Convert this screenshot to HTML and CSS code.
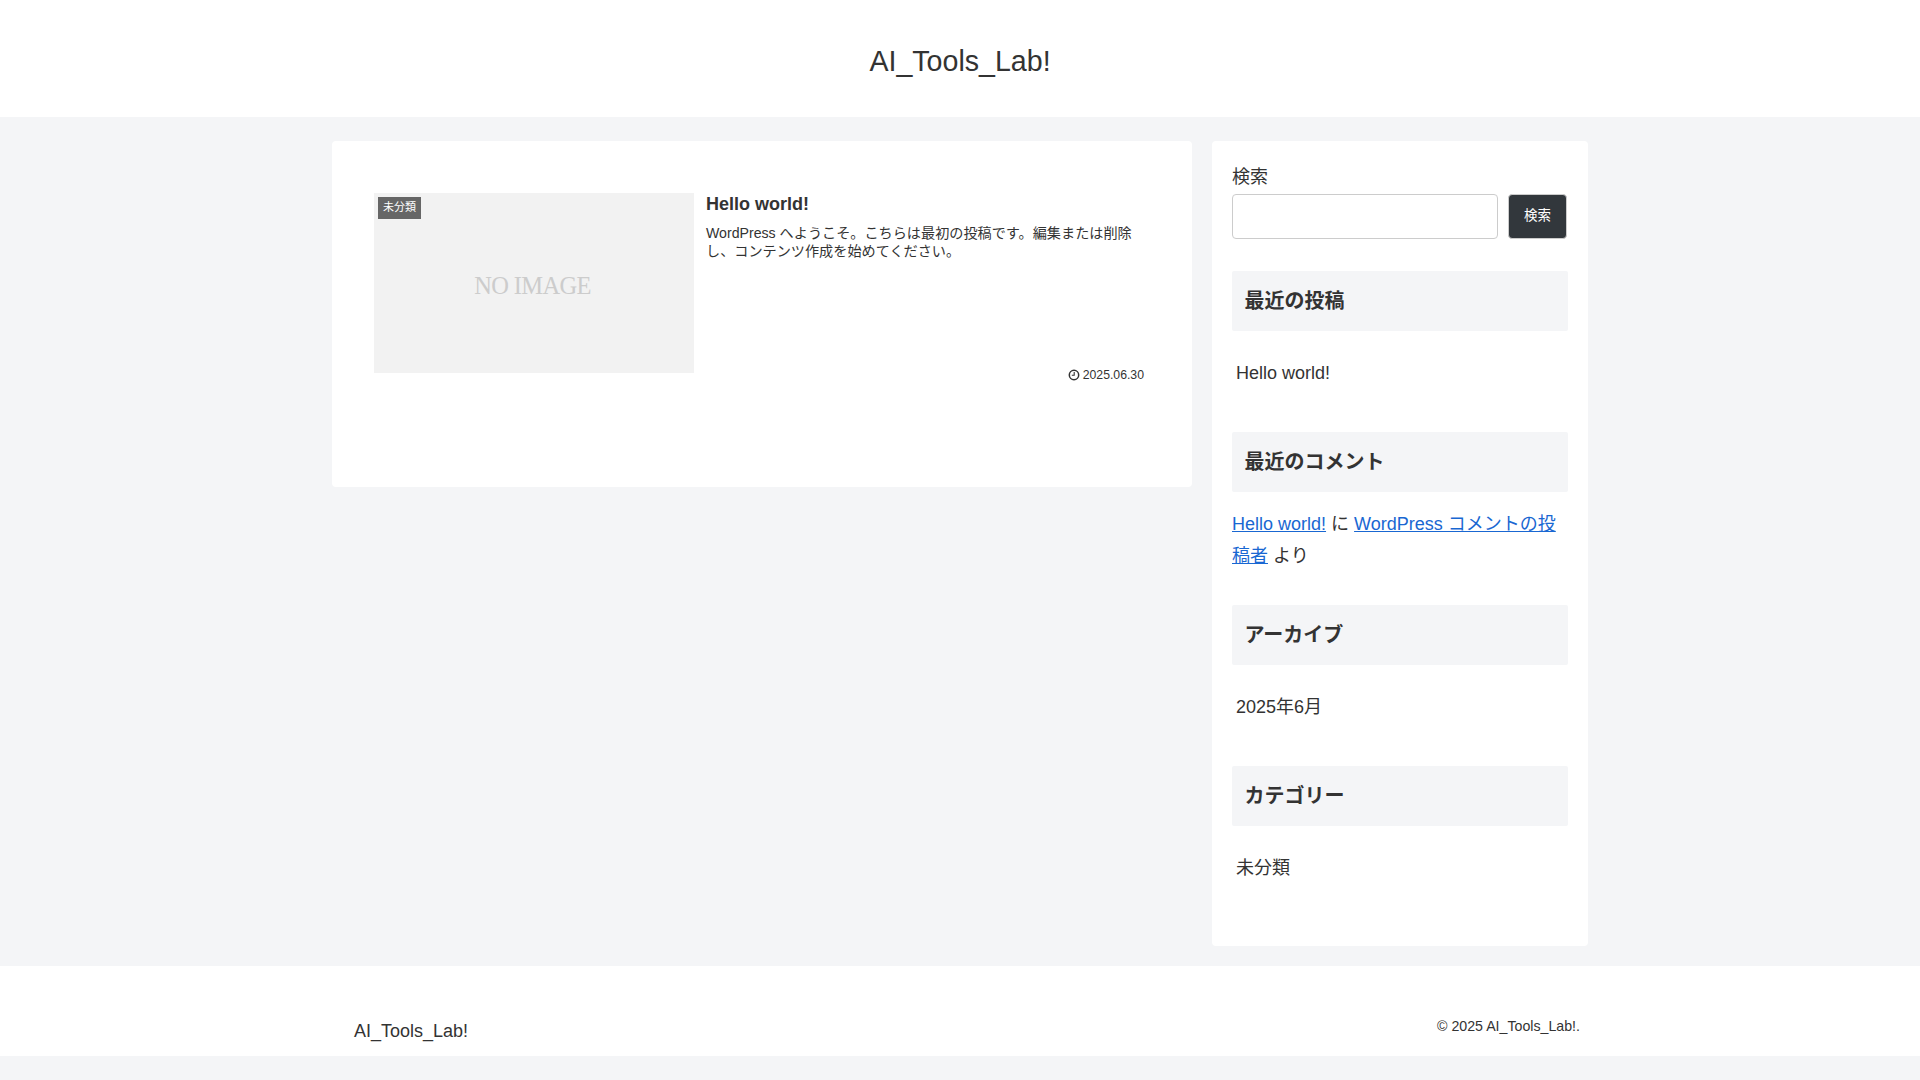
FILE: index.html
```html
<!DOCTYPE html>
<html lang="ja">
<head>
<meta charset="utf-8">
<title>AI_Tools_Lab!</title>
<link rel="stylesheet" href="styles.css">
</head>
<body>
<header class="site-header"><a class="site-title" href="#">AI_Tools_Lab!</a></header>
<div class="wrap">
  <main class="main">
    <article class="card">
      <div class="thumb">
        <span class="noimage">NO IMAGE</span>
        <span class="cat-label">未分類</span>
      </div>
      <div class="card-body">
        <h2 class="card-title">Hello world!</h2>
        <p class="snippet">WordPress へようこそ。こちらは最初の投稿です。編集または削除し、コンテンツ作成を始めてください。</p>
        <div class="card-meta">
          <svg class="clock" viewBox="0 0 12 12" aria-hidden="true"><circle cx="6" cy="6" r="4.7" fill="none" stroke="#333" stroke-width="1.5"/><path d="M6.2 3v3.3H3.8" fill="none" stroke="#333" stroke-width="1.1"/></svg>
          <span>2025.06.30</span>
        </div>
      </div>
    </article>
  </main>
  <aside class="sidebar">
    <form class="search">
      <label class="search-label" for="s">検索</label>
      <div class="search-row">
        <input class="search-input" id="s" type="text">
        <button class="search-button" type="button">検索</button>
      </div>
    </form>
    <section class="widget">
      <h3 class="widget-title">最近の投稿</h3>
      <div class="widget-item">Hello world!</div>
    </section>
    <section class="widget">
      <h3 class="widget-title">最近のコメント</h3>
      <p class="widget-comment"><a href="#">Hello world!</a> に <a href="#">WordPress コメントの投稿者</a> より</p>
    </section>
    <section class="widget">
      <h3 class="widget-title">アーカイブ</h3>
      <div class="widget-item">2025年6月</div>
    </section>
    <section class="widget">
      <h3 class="widget-title">カテゴリー</h3>
      <div class="widget-item">未分類</div>
    </section>
  </aside>
</div>
<footer class="site-footer">
  <div class="footer-in">
    <a class="footer-logo" href="#">AI_Tools_Lab!</a>
    <div class="copyright">© 2025 AI_Tools_Lab!.</div>
  </div>
</footer>
<div class="page-end"></div>
</body>
</html>
```
FILE: styles.css
```css
* { box-sizing: border-box; }
html, body { margin: 0; padding: 0; }
body {
  background: #f4f5f7;
  color: #333;
  font-family: "Liberation Sans", "Noto Sans CJK JP", sans-serif;
  font-size: 18px;
  line-height: 1.8;
}
a { color: #1967d2; }
.site-header {
  height: 117px;
  background: #fff;
  display: flex;
  justify-content: center;
  padding-top: 43px;
}
.site-title { color: #333; text-decoration: none; font-size: 28.6px; line-height: 36px; }
.wrap {
  width: 1256px;
  margin: 24px auto 20px;
  display: flex;
  gap: 20px;
  align-items: flex-start;
}
.main {
  width: 860px;
  height: 346px;
  background: #fff;
  border-radius: 4px;
  padding: 52px 42px;
}
.card { display: flex; gap: 12px; align-items: flex-start; }
.thumb {
  position: relative;
  width: 320px;
  height: 180px;
  flex: none;
  background: #f2f2f2;
  display: flex;
  align-items: center;
  justify-content: center;
  padding: 6px 3px 0 0;
}
.noimage { font-family: "Liberation Serif", serif; font-size: 24.5px; letter-spacing: -0.65px; color: #ccc; line-height: 1; }
.cat-label {
  position: absolute;
  top: 4px;
  left: 4px;
  width: 43px;
  height: 22px;
  background: #666;
  color: #fff;
  font-size: 11px;
  line-height: 20px;
  text-align: center;
}
.card-body { flex: 1; min-height: 192px; padding-right: 6px; min-width: 0; display: flex; flex-direction: column; }
.card-title { margin: -1px 0 0; font-size: 18px; line-height: 24px; font-weight: 700; }
.snippet { margin: 8px 0 0; font-size: 14.15px; line-height: 18.4px; }
.card-meta {
  margin-top: auto;
  height: 20px;
  display: flex;
  justify-content: flex-end;
  align-items: center;
  gap: 3px;
  font-size: 12.25px;
  line-height: 1;
}
.clock { width: 12px; height: 12px; margin-left: -1px; }
.sidebar {
  width: 376px;
  height: 805px;
  background: #fff;
  border-radius: 4px;
  padding: 19px 20px;
}
.search { margin-bottom: 32px; }
.search-label { display: block; line-height: 32px; margin-bottom: 2px; position: relative; top: 1px; }
.search-row { display: flex; gap: 10px; }
.search-input {
  width: 266px;
  height: 45px;
  border: 1px solid #ccc;
  border-radius: 4px;
  background: #fff;
}
.search-button {
  width: 59px;
  height: 45px;
  border: 1px solid #ccc;
  border-radius: 4px;
  background: #32373c;
  color: #fff;
  font: inherit;
  font-size: 13.5px;
  padding: 0 0 1px;
}
.widget { margin-bottom: 34px; }
.widget-title {
  margin: 0;
  height: 60px;
  background: #f4f5f7;
  border-radius: 2px;
  padding: 0 12.5px;
  font-size: 20px;
  line-height: 60px;
  font-weight: 700;
}
.widget-item { padding: 26px 4px 43px; margin-bottom: -34px; line-height: 32px; }
.widget-comment { margin: 0; padding: 16px 0 0; margin-bottom: -1px; line-height: 32px; }
.site-footer { height: 90px; background: #fff; }
.footer-in {
  width: 1256px;
  height: 100%;
  margin: 0 auto;
  display: flex;
  justify-content: space-between;
  padding: 0 8px 0 22px;
}
.footer-logo { color: #333; text-decoration: none; margin-top: 49px; line-height: 32px; }
.copyright { font-size: 14.2px; margin-top: 50px; line-height: 20px; }
.page-end { height: 24px; }
```
